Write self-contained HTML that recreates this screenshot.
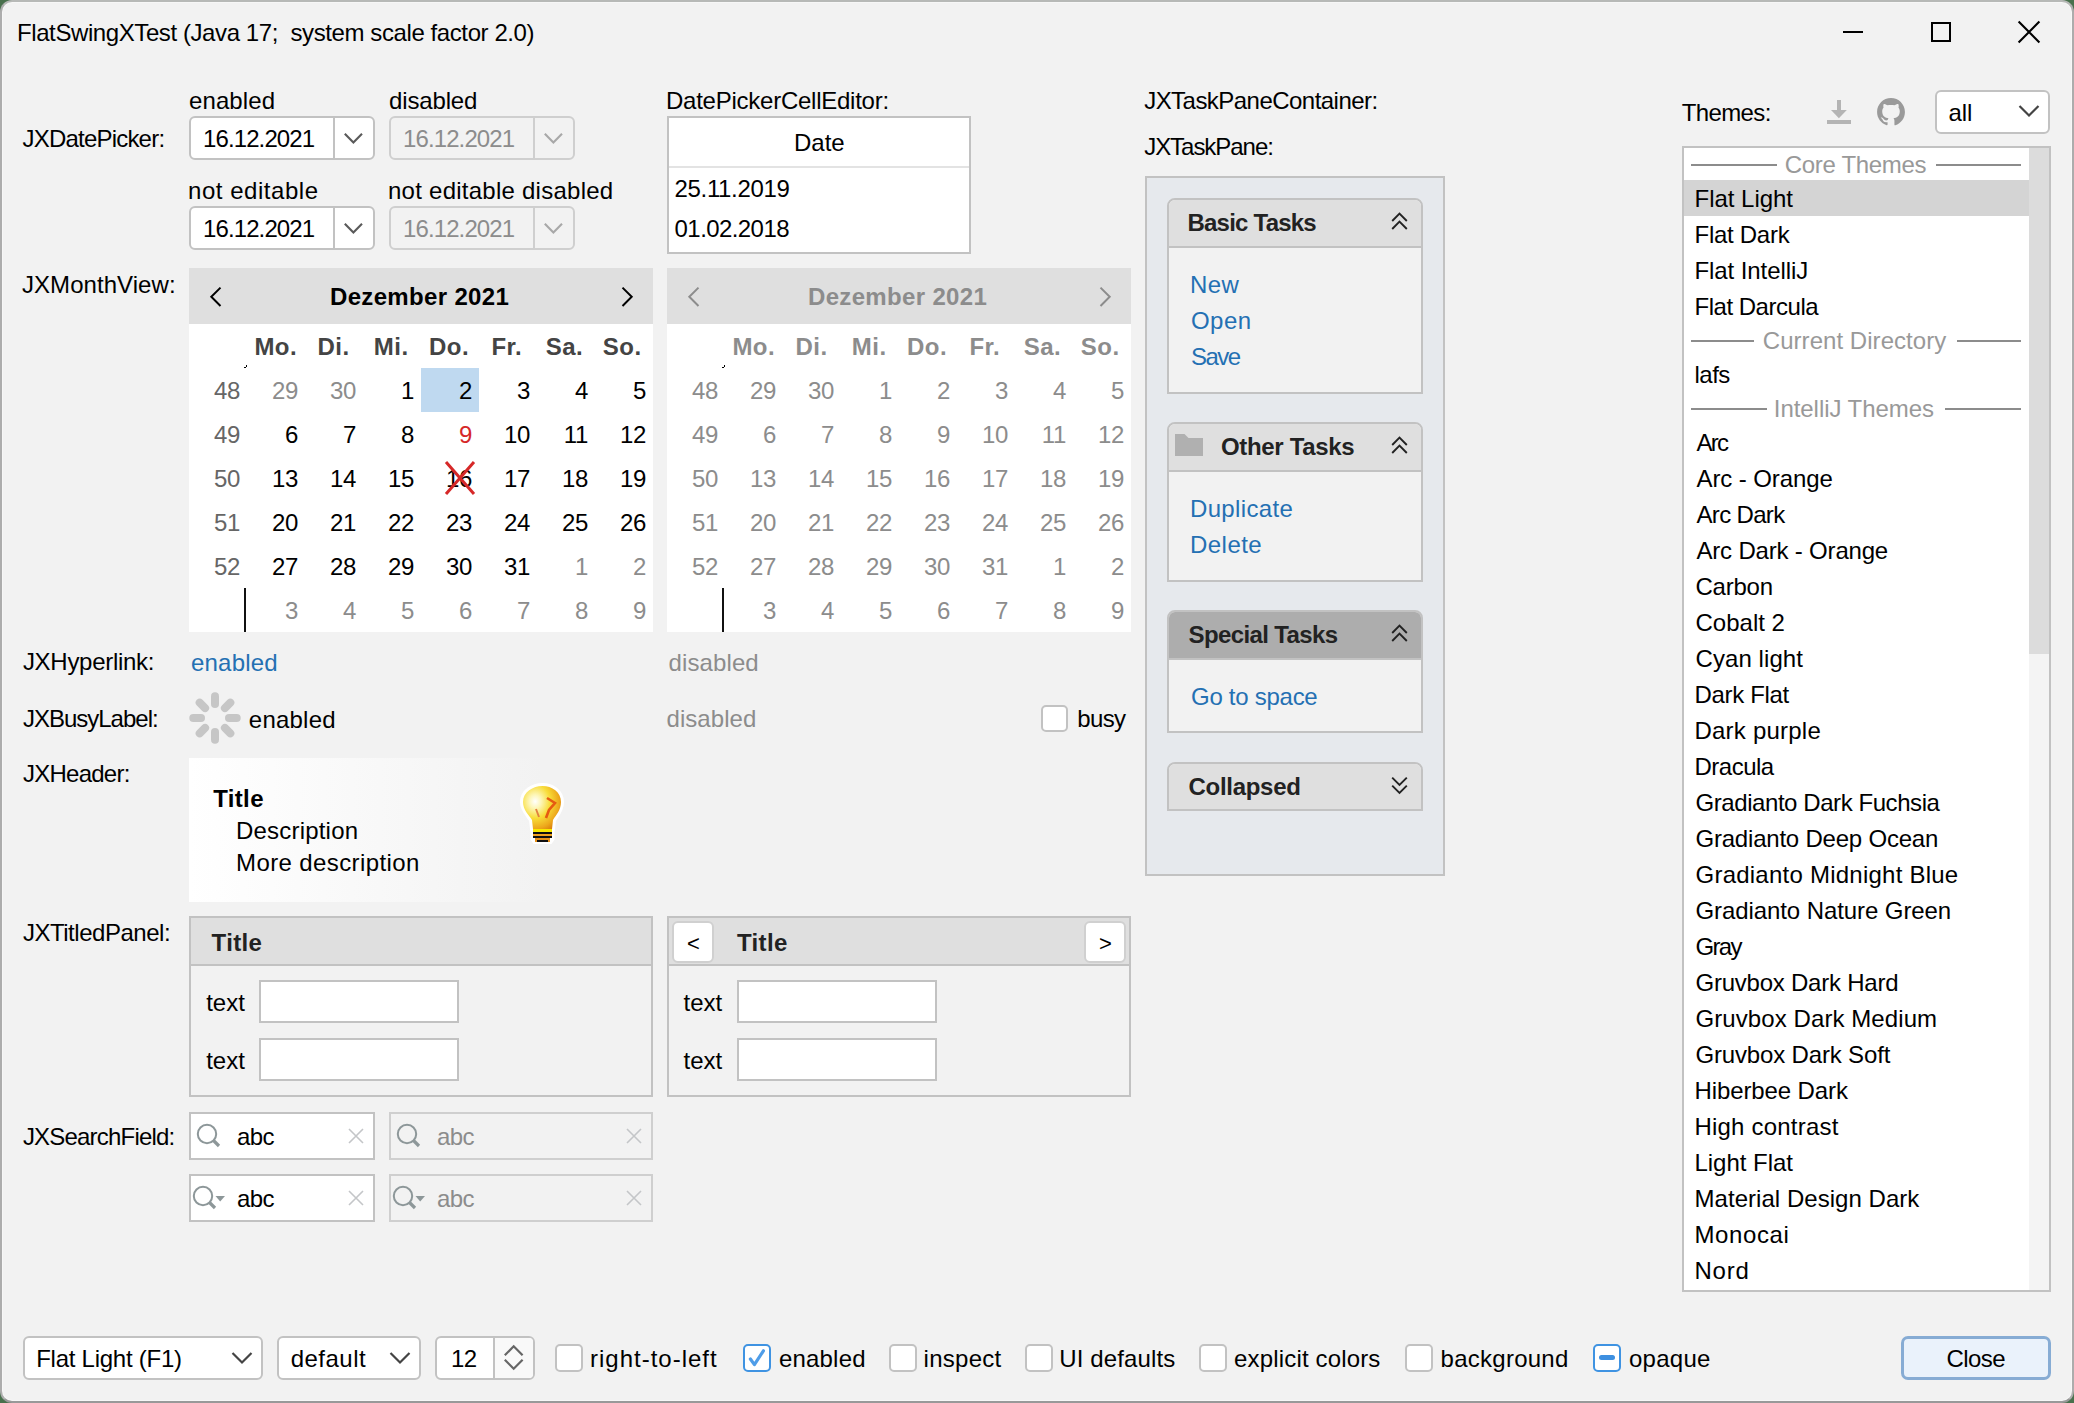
<!DOCTYPE html>
<html><head><meta charset="utf-8"><style>
html,body{margin:0;padding:0;width:2074px;height:1403px;overflow:hidden;background:#48704c}
.win{position:absolute;left:0;top:0;width:2074px;height:1403px;box-sizing:border-box;border:2px solid #b7b9b7;border-left-color:#adadad;border-right-color:#acacac;border-bottom-color:#999;border-radius:12px;background:#f2f2f2;box-shadow:inset 0 0 0 1px #f7f7f7;overflow:hidden}
.t{position:absolute;white-space:nowrap;line-height:28px;font-family:"Liberation Sans",sans-serif;font-size:24px}
</style></head><body><div class="win"></div>
<div class="t" style="left:17px;top:19px;color:#000;letter-spacing:-0.408px;">FlatSwingXTest (Java 17;&nbsp; system scale factor 2.0)</div>
<div style="position:absolute;left:1843px;top:31px;width:20px;height:2px;box-sizing:border-box;background:#000"></div>
<div style="position:absolute;left:1931px;top:22px;width:20px;height:20px;box-sizing:border-box;border:2px solid #000"></div>
<svg style="position:absolute;left:2016px;top:19px;" width="26" height="26" viewBox="0 0 26 26"><path d="M2.6 2.6 L23.4 23.4 M23.4 2.6 L2.6 23.4" stroke="#000" stroke-width="2.1" fill="none"/></svg>
<div class="t" style="left:22.5px;top:125px;color:#000;letter-spacing:-0.792px;">JXDatePicker:</div>
<div class="t" style="left:189px;top:87px;color:#000;letter-spacing:0.100px;">enabled</div>
<div class="t" style="left:389px;top:87px;color:#000;letter-spacing:-0.143px;">disabled</div>
<div class="t" style="left:188px;top:177px;color:#000;letter-spacing:0.545px;">not editable</div>
<div class="t" style="left:388px;top:177px;color:#000;letter-spacing:0.250px;">not editable disabled</div>
<div style="position:absolute;left:189px;top:116px;width:186px;height:44px;box-sizing:border-box;border:2px solid #c2c2c2;border-radius:6px;background:#fff"></div>
<div style="position:absolute;left:333px;top:118px;width:2px;height:40px;box-sizing:border-box;background:#c2c2c2"></div>
<svg style="position:absolute;left:344px;top:133px;" width="20" height="12" viewBox="0 0 20 12"><path d="M0.8 0.8 L9.4 9.6 L18 0.8" stroke="#5a5a5a" stroke-width="2.1" fill="none"/></svg>
<div class="t" style="left:203px;top:125px;color:#000;letter-spacing:-0.889px;">16.12.2021</div>
<div style="position:absolute;left:389px;top:116px;width:186px;height:44px;box-sizing:border-box;border:2px solid #cfcfcf;border-radius:6px;background:#f2f2f2"></div>
<div style="position:absolute;left:533px;top:118px;width:2px;height:40px;box-sizing:border-box;background:#cfcfcf"></div>
<svg style="position:absolute;left:544px;top:133px;" width="20" height="12" viewBox="0 0 20 12"><path d="M0.8 0.8 L9.4 9.6 L18 0.8" stroke="#a8a8a8" stroke-width="2.1" fill="none"/></svg>
<div class="t" style="left:403px;top:125px;color:#8c8c8c;letter-spacing:-0.889px;">16.12.2021</div>
<div style="position:absolute;left:189px;top:206px;width:186px;height:44px;box-sizing:border-box;border:2px solid #c2c2c2;border-radius:6px;background:#fff"></div>
<div style="position:absolute;left:333px;top:208px;width:2px;height:40px;box-sizing:border-box;background:#c2c2c2"></div>
<svg style="position:absolute;left:344px;top:223px;" width="20" height="12" viewBox="0 0 20 12"><path d="M0.8 0.8 L9.4 9.6 L18 0.8" stroke="#5a5a5a" stroke-width="2.1" fill="none"/></svg>
<div class="t" style="left:203px;top:215px;color:#000;letter-spacing:-0.889px;">16.12.2021</div>
<div style="position:absolute;left:389px;top:206px;width:186px;height:44px;box-sizing:border-box;border:2px solid #cfcfcf;border-radius:6px;background:#f2f2f2"></div>
<div style="position:absolute;left:533px;top:208px;width:2px;height:40px;box-sizing:border-box;background:#cfcfcf"></div>
<svg style="position:absolute;left:544px;top:223px;" width="20" height="12" viewBox="0 0 20 12"><path d="M0.8 0.8 L9.4 9.6 L18 0.8" stroke="#a8a8a8" stroke-width="2.1" fill="none"/></svg>
<div class="t" style="left:403px;top:215px;color:#8c8c8c;letter-spacing:-0.889px;">16.12.2021</div>
<div class="t" style="left:666px;top:87px;color:#000;letter-spacing:-0.250px;">DatePickerCellEditor:</div>
<div style="position:absolute;left:667px;top:116px;width:304px;height:138px;box-sizing:border-box;border:2px solid #c2c2c2;background:#fff"></div>
<div style="position:absolute;left:669px;top:166px;width:300px;height:2px;box-sizing:border-box;background:#e3e3e3"></div>
<div class="t" style="left:794px;top:129px;color:#000;letter-spacing:0.000px;">Date</div>
<div class="t" style="left:674.6px;top:175px;color:#000;letter-spacing:-0.356px;">25.11.2019</div>
<div class="t" style="left:674.6px;top:215px;color:#000;letter-spacing:-0.578px;">01.02.2018</div>
<div class="t" style="left:22px;top:271px;color:#000;letter-spacing:0.055px;">JXMonthView:</div>
<div style="position:absolute;left:189px;top:268px;width:464px;height:364px;box-sizing:border-box;background:#fff"></div>
<div style="position:absolute;left:189px;top:268px;width:464px;height:56px;box-sizing:border-box;background:#dfdfdf"></div>
<div class="t" style="left:330px;top:283px;color:#000;font-weight:bold;letter-spacing:0.333px;">Dezember 2021</div>
<svg style="position:absolute;left:208px;top:285px;" width="16" height="24" viewBox="0 0 16 24"><path d="M12.5 2.6 L3.3 11.8 L12.5 21" stroke="#000" stroke-width="2" fill="none"/></svg>
<svg style="position:absolute;left:619px;top:285px;" width="16" height="24" viewBox="0 0 16 24"><path d="M3.5 2.6 L12.7 11.8 L3.5 21" stroke="#000" stroke-width="2" fill="none"/></svg>
<div class="t" style="left:235.8px;width:80px;text-align:center;top:333px;color:#444;font-weight:bold;letter-spacing:0.5px">Mo.</div>
<div class="t" style="left:293.5px;width:80px;text-align:center;top:333px;color:#444;font-weight:bold;letter-spacing:0.5px">Di.</div>
<div class="t" style="left:351.2px;width:80px;text-align:center;top:333px;color:#444;font-weight:bold;letter-spacing:0.5px">Mi.</div>
<div class="t" style="left:409.0px;width:80px;text-align:center;top:333px;color:#444;font-weight:bold;letter-spacing:0.5px">Do.</div>
<div class="t" style="left:466.8px;width:80px;text-align:center;top:333px;color:#444;font-weight:bold;letter-spacing:0.5px">Fr.</div>
<div class="t" style="left:524.5px;width:80px;text-align:center;top:333px;color:#444;font-weight:bold;letter-spacing:0.5px">Sa.</div>
<div class="t" style="left:582.2px;width:80px;text-align:center;top:333px;color:#444;font-weight:bold;letter-spacing:0.5px">So.</div>
<div style="position:absolute;left:244px;top:367px;width:2px;height:1px;box-sizing:border-box;background:#000"></div>
<div style="position:absolute;left:246px;top:365px;width:1px;height:2px;box-sizing:border-box;background:#000"></div>
<div style="position:absolute;left:244px;top:588px;width:2px;height:44px;box-sizing:border-box;background:#111"></div>
<div style="position:absolute;left:421px;top:368px;width:58px;height:44px;box-sizing:border-box;background:#bfd9f0"></div>
<div class="t" style="left:189px;width:51px;text-align:right;top:377px;color:#666;letter-spacing:-0.3px">48</div>
<div class="t" style="left:238px;width:60px;text-align:right;top:377px;color:#8c8c8c;letter-spacing:-0.3px">29</div>
<div class="t" style="left:296px;width:60px;text-align:right;top:377px;color:#8c8c8c;letter-spacing:-0.3px">30</div>
<div class="t" style="left:354px;width:60px;text-align:right;top:377px;color:#000;letter-spacing:-0.3px">1</div>
<div class="t" style="left:412px;width:60px;text-align:right;top:377px;color:#000;letter-spacing:-0.3px">2</div>
<div class="t" style="left:470px;width:60px;text-align:right;top:377px;color:#000;letter-spacing:-0.3px">3</div>
<div class="t" style="left:528px;width:60px;text-align:right;top:377px;color:#000;letter-spacing:-0.3px">4</div>
<div class="t" style="left:586px;width:60px;text-align:right;top:377px;color:#000;letter-spacing:-0.3px">5</div>
<div class="t" style="left:189px;width:51px;text-align:right;top:421px;color:#666;letter-spacing:-0.3px">49</div>
<div class="t" style="left:238px;width:60px;text-align:right;top:421px;color:#000;letter-spacing:-0.3px">6</div>
<div class="t" style="left:296px;width:60px;text-align:right;top:421px;color:#000;letter-spacing:-0.3px">7</div>
<div class="t" style="left:354px;width:60px;text-align:right;top:421px;color:#000;letter-spacing:-0.3px">8</div>
<div class="t" style="left:412px;width:60px;text-align:right;top:421px;color:#d62828;letter-spacing:-0.3px">9</div>
<div class="t" style="left:470px;width:60px;text-align:right;top:421px;color:#000;letter-spacing:-0.3px">10</div>
<div class="t" style="left:528px;width:60px;text-align:right;top:421px;color:#000;letter-spacing:-0.3px">11</div>
<div class="t" style="left:586px;width:60px;text-align:right;top:421px;color:#000;letter-spacing:-0.3px">12</div>
<div class="t" style="left:189px;width:51px;text-align:right;top:465px;color:#666;letter-spacing:-0.3px">50</div>
<div class="t" style="left:238px;width:60px;text-align:right;top:465px;color:#000;letter-spacing:-0.3px">13</div>
<div class="t" style="left:296px;width:60px;text-align:right;top:465px;color:#000;letter-spacing:-0.3px">14</div>
<div class="t" style="left:354px;width:60px;text-align:right;top:465px;color:#000;letter-spacing:-0.3px">15</div>
<div class="t" style="left:412px;width:60px;text-align:right;top:465px;color:#000;letter-spacing:-0.3px">16</div>
<div class="t" style="left:470px;width:60px;text-align:right;top:465px;color:#000;letter-spacing:-0.3px">17</div>
<div class="t" style="left:528px;width:60px;text-align:right;top:465px;color:#000;letter-spacing:-0.3px">18</div>
<div class="t" style="left:586px;width:60px;text-align:right;top:465px;color:#000;letter-spacing:-0.3px">19</div>
<div class="t" style="left:189px;width:51px;text-align:right;top:509px;color:#666;letter-spacing:-0.3px">51</div>
<div class="t" style="left:238px;width:60px;text-align:right;top:509px;color:#000;letter-spacing:-0.3px">20</div>
<div class="t" style="left:296px;width:60px;text-align:right;top:509px;color:#000;letter-spacing:-0.3px">21</div>
<div class="t" style="left:354px;width:60px;text-align:right;top:509px;color:#000;letter-spacing:-0.3px">22</div>
<div class="t" style="left:412px;width:60px;text-align:right;top:509px;color:#000;letter-spacing:-0.3px">23</div>
<div class="t" style="left:470px;width:60px;text-align:right;top:509px;color:#000;letter-spacing:-0.3px">24</div>
<div class="t" style="left:528px;width:60px;text-align:right;top:509px;color:#000;letter-spacing:-0.3px">25</div>
<div class="t" style="left:586px;width:60px;text-align:right;top:509px;color:#000;letter-spacing:-0.3px">26</div>
<div class="t" style="left:189px;width:51px;text-align:right;top:553px;color:#666;letter-spacing:-0.3px">52</div>
<div class="t" style="left:238px;width:60px;text-align:right;top:553px;color:#000;letter-spacing:-0.3px">27</div>
<div class="t" style="left:296px;width:60px;text-align:right;top:553px;color:#000;letter-spacing:-0.3px">28</div>
<div class="t" style="left:354px;width:60px;text-align:right;top:553px;color:#000;letter-spacing:-0.3px">29</div>
<div class="t" style="left:412px;width:60px;text-align:right;top:553px;color:#000;letter-spacing:-0.3px">30</div>
<div class="t" style="left:470px;width:60px;text-align:right;top:553px;color:#000;letter-spacing:-0.3px">31</div>
<div class="t" style="left:528px;width:60px;text-align:right;top:553px;color:#8c8c8c;letter-spacing:-0.3px">1</div>
<div class="t" style="left:586px;width:60px;text-align:right;top:553px;color:#8c8c8c;letter-spacing:-0.3px">2</div>
<div class="t" style="left:238px;width:60px;text-align:right;top:597px;color:#8c8c8c;letter-spacing:-0.3px">3</div>
<div class="t" style="left:296px;width:60px;text-align:right;top:597px;color:#8c8c8c;letter-spacing:-0.3px">4</div>
<div class="t" style="left:354px;width:60px;text-align:right;top:597px;color:#8c8c8c;letter-spacing:-0.3px">5</div>
<div class="t" style="left:412px;width:60px;text-align:right;top:597px;color:#8c8c8c;letter-spacing:-0.3px">6</div>
<div class="t" style="left:470px;width:60px;text-align:right;top:597px;color:#8c8c8c;letter-spacing:-0.3px">7</div>
<div class="t" style="left:528px;width:60px;text-align:right;top:597px;color:#8c8c8c;letter-spacing:-0.3px">8</div>
<div class="t" style="left:586px;width:60px;text-align:right;top:597px;color:#8c8c8c;letter-spacing:-0.3px">9</div>
<svg style="position:absolute;left:444px;top:460px;" width="32" height="36" viewBox="0 0 32 36"><path d="M2 2 L30 34 M30 2 L2 34" stroke="#d62828" stroke-width="3" fill="none"/></svg>
<div style="position:absolute;left:667px;top:268px;width:464px;height:364px;box-sizing:border-box;background:#fff"></div>
<div style="position:absolute;left:667px;top:268px;width:464px;height:56px;box-sizing:border-box;background:#dfdfdf"></div>
<div class="t" style="left:808px;top:283px;color:#8c8c8c;font-weight:bold;letter-spacing:0.333px;">Dezember 2021</div>
<svg style="position:absolute;left:686px;top:285px;" width="16" height="24" viewBox="0 0 16 24"><path d="M12.5 2.6 L3.3 11.8 L12.5 21" stroke="#8c8c8c" stroke-width="2" fill="none"/></svg>
<svg style="position:absolute;left:1097px;top:285px;" width="16" height="24" viewBox="0 0 16 24"><path d="M3.5 2.6 L12.7 11.8 L3.5 21" stroke="#8c8c8c" stroke-width="2" fill="none"/></svg>
<div class="t" style="left:713.8px;width:80px;text-align:center;top:333px;color:#8c8c8c;font-weight:bold;letter-spacing:0.5px">Mo.</div>
<div class="t" style="left:771.5px;width:80px;text-align:center;top:333px;color:#8c8c8c;font-weight:bold;letter-spacing:0.5px">Di.</div>
<div class="t" style="left:829.2px;width:80px;text-align:center;top:333px;color:#8c8c8c;font-weight:bold;letter-spacing:0.5px">Mi.</div>
<div class="t" style="left:887.0px;width:80px;text-align:center;top:333px;color:#8c8c8c;font-weight:bold;letter-spacing:0.5px">Do.</div>
<div class="t" style="left:944.8px;width:80px;text-align:center;top:333px;color:#8c8c8c;font-weight:bold;letter-spacing:0.5px">Fr.</div>
<div class="t" style="left:1002.5px;width:80px;text-align:center;top:333px;color:#8c8c8c;font-weight:bold;letter-spacing:0.5px">Sa.</div>
<div class="t" style="left:1060.2px;width:80px;text-align:center;top:333px;color:#8c8c8c;font-weight:bold;letter-spacing:0.5px">So.</div>
<div style="position:absolute;left:722px;top:367px;width:2px;height:1px;box-sizing:border-box;background:#000"></div>
<div style="position:absolute;left:724px;top:365px;width:1px;height:2px;box-sizing:border-box;background:#000"></div>
<div style="position:absolute;left:722px;top:588px;width:2px;height:44px;box-sizing:border-box;background:#111"></div>
<div class="t" style="left:667px;width:51px;text-align:right;top:377px;color:#8c8c8c;letter-spacing:-0.3px">48</div>
<div class="t" style="left:716px;width:60px;text-align:right;top:377px;color:#8c8c8c;letter-spacing:-0.3px">29</div>
<div class="t" style="left:774px;width:60px;text-align:right;top:377px;color:#8c8c8c;letter-spacing:-0.3px">30</div>
<div class="t" style="left:832px;width:60px;text-align:right;top:377px;color:#8c8c8c;letter-spacing:-0.3px">1</div>
<div class="t" style="left:890px;width:60px;text-align:right;top:377px;color:#8c8c8c;letter-spacing:-0.3px">2</div>
<div class="t" style="left:948px;width:60px;text-align:right;top:377px;color:#8c8c8c;letter-spacing:-0.3px">3</div>
<div class="t" style="left:1006px;width:60px;text-align:right;top:377px;color:#8c8c8c;letter-spacing:-0.3px">4</div>
<div class="t" style="left:1064px;width:60px;text-align:right;top:377px;color:#8c8c8c;letter-spacing:-0.3px">5</div>
<div class="t" style="left:667px;width:51px;text-align:right;top:421px;color:#8c8c8c;letter-spacing:-0.3px">49</div>
<div class="t" style="left:716px;width:60px;text-align:right;top:421px;color:#8c8c8c;letter-spacing:-0.3px">6</div>
<div class="t" style="left:774px;width:60px;text-align:right;top:421px;color:#8c8c8c;letter-spacing:-0.3px">7</div>
<div class="t" style="left:832px;width:60px;text-align:right;top:421px;color:#8c8c8c;letter-spacing:-0.3px">8</div>
<div class="t" style="left:890px;width:60px;text-align:right;top:421px;color:#8c8c8c;letter-spacing:-0.3px">9</div>
<div class="t" style="left:948px;width:60px;text-align:right;top:421px;color:#8c8c8c;letter-spacing:-0.3px">10</div>
<div class="t" style="left:1006px;width:60px;text-align:right;top:421px;color:#8c8c8c;letter-spacing:-0.3px">11</div>
<div class="t" style="left:1064px;width:60px;text-align:right;top:421px;color:#8c8c8c;letter-spacing:-0.3px">12</div>
<div class="t" style="left:667px;width:51px;text-align:right;top:465px;color:#8c8c8c;letter-spacing:-0.3px">50</div>
<div class="t" style="left:716px;width:60px;text-align:right;top:465px;color:#8c8c8c;letter-spacing:-0.3px">13</div>
<div class="t" style="left:774px;width:60px;text-align:right;top:465px;color:#8c8c8c;letter-spacing:-0.3px">14</div>
<div class="t" style="left:832px;width:60px;text-align:right;top:465px;color:#8c8c8c;letter-spacing:-0.3px">15</div>
<div class="t" style="left:890px;width:60px;text-align:right;top:465px;color:#8c8c8c;letter-spacing:-0.3px">16</div>
<div class="t" style="left:948px;width:60px;text-align:right;top:465px;color:#8c8c8c;letter-spacing:-0.3px">17</div>
<div class="t" style="left:1006px;width:60px;text-align:right;top:465px;color:#8c8c8c;letter-spacing:-0.3px">18</div>
<div class="t" style="left:1064px;width:60px;text-align:right;top:465px;color:#8c8c8c;letter-spacing:-0.3px">19</div>
<div class="t" style="left:667px;width:51px;text-align:right;top:509px;color:#8c8c8c;letter-spacing:-0.3px">51</div>
<div class="t" style="left:716px;width:60px;text-align:right;top:509px;color:#8c8c8c;letter-spacing:-0.3px">20</div>
<div class="t" style="left:774px;width:60px;text-align:right;top:509px;color:#8c8c8c;letter-spacing:-0.3px">21</div>
<div class="t" style="left:832px;width:60px;text-align:right;top:509px;color:#8c8c8c;letter-spacing:-0.3px">22</div>
<div class="t" style="left:890px;width:60px;text-align:right;top:509px;color:#8c8c8c;letter-spacing:-0.3px">23</div>
<div class="t" style="left:948px;width:60px;text-align:right;top:509px;color:#8c8c8c;letter-spacing:-0.3px">24</div>
<div class="t" style="left:1006px;width:60px;text-align:right;top:509px;color:#8c8c8c;letter-spacing:-0.3px">25</div>
<div class="t" style="left:1064px;width:60px;text-align:right;top:509px;color:#8c8c8c;letter-spacing:-0.3px">26</div>
<div class="t" style="left:667px;width:51px;text-align:right;top:553px;color:#8c8c8c;letter-spacing:-0.3px">52</div>
<div class="t" style="left:716px;width:60px;text-align:right;top:553px;color:#8c8c8c;letter-spacing:-0.3px">27</div>
<div class="t" style="left:774px;width:60px;text-align:right;top:553px;color:#8c8c8c;letter-spacing:-0.3px">28</div>
<div class="t" style="left:832px;width:60px;text-align:right;top:553px;color:#8c8c8c;letter-spacing:-0.3px">29</div>
<div class="t" style="left:890px;width:60px;text-align:right;top:553px;color:#8c8c8c;letter-spacing:-0.3px">30</div>
<div class="t" style="left:948px;width:60px;text-align:right;top:553px;color:#8c8c8c;letter-spacing:-0.3px">31</div>
<div class="t" style="left:1006px;width:60px;text-align:right;top:553px;color:#8c8c8c;letter-spacing:-0.3px">1</div>
<div class="t" style="left:1064px;width:60px;text-align:right;top:553px;color:#8c8c8c;letter-spacing:-0.3px">2</div>
<div class="t" style="left:716px;width:60px;text-align:right;top:597px;color:#8c8c8c;letter-spacing:-0.3px">3</div>
<div class="t" style="left:774px;width:60px;text-align:right;top:597px;color:#8c8c8c;letter-spacing:-0.3px">4</div>
<div class="t" style="left:832px;width:60px;text-align:right;top:597px;color:#8c8c8c;letter-spacing:-0.3px">5</div>
<div class="t" style="left:890px;width:60px;text-align:right;top:597px;color:#8c8c8c;letter-spacing:-0.3px">6</div>
<div class="t" style="left:948px;width:60px;text-align:right;top:597px;color:#8c8c8c;letter-spacing:-0.3px">7</div>
<div class="t" style="left:1006px;width:60px;text-align:right;top:597px;color:#8c8c8c;letter-spacing:-0.3px">8</div>
<div class="t" style="left:1064px;width:60px;text-align:right;top:597px;color:#8c8c8c;letter-spacing:-0.3px">9</div>
<div class="t" style="left:22.9px;top:648px;color:#000;letter-spacing:-0.282px;">JXHyperlink:</div>
<div class="t" style="left:190.9px;top:649px;color:#2470b3;letter-spacing:0.233px;">enabled</div>
<div class="t" style="left:668.5px;top:649px;color:#8c8c8c;letter-spacing:0.114px;">disabled</div>
<div class="t" style="left:22.9px;top:705px;color:#000;letter-spacing:-1.000px;">JXBusyLabel:</div>
<svg style="position:absolute;left:189px;top:692px;" width="52" height="52" viewBox="0 0 52 52"><line x1="40.00" y1="26.00" x2="47.70" y2="26.00" stroke="#c6c6c6" stroke-width="8" stroke-linecap="round"/><line x1="35.90" y1="35.90" x2="41.34" y2="41.34" stroke="#c6c6c6" stroke-width="8" stroke-linecap="round"/><line x1="26.00" y1="40.00" x2="26.00" y2="47.70" stroke="#c6c6c6" stroke-width="8" stroke-linecap="round"/><line x1="16.10" y1="35.90" x2="10.66" y2="41.34" stroke="#c6c6c6" stroke-width="8" stroke-linecap="round"/><line x1="12.00" y1="26.00" x2="4.30" y2="26.00" stroke="#c6c6c6" stroke-width="8" stroke-linecap="round"/><line x1="16.10" y1="16.10" x2="10.66" y2="10.66" stroke="#c6c6c6" stroke-width="8" stroke-linecap="round"/><line x1="26.00" y1="12.00" x2="26.00" y2="4.30" stroke="#c6c6c6" stroke-width="8" stroke-linecap="round"/><line x1="35.90" y1="16.10" x2="41.34" y2="10.66" stroke="#c6c6c6" stroke-width="8" stroke-linecap="round"/></svg>
<div class="t" style="left:248.8px;top:706px;color:#000;letter-spacing:0.233px;">enabled</div>
<div class="t" style="left:666.5px;top:705px;color:#8c8c8c;letter-spacing:0.057px;">disabled</div>
<div style="position:absolute;left:1041px;top:705px;width:27px;height:27px;box-sizing:border-box;border:2px solid #c2c2c2;border-radius:5px;background:#fff"></div>
<div class="t" style="left:1077.2px;top:705px;color:#000;letter-spacing:-0.600px;">busy</div>
<div class="t" style="left:22.9px;top:760px;color:#000;letter-spacing:-0.738px;">JXHeader:</div>
<div style="position:absolute;left:189px;top:758px;width:354px;height:144px;box-sizing:border-box;background:linear-gradient(to right,#ffffff 0%,#f2f2f2 100%)"></div>
<div class="t" style="left:213.2px;top:785px;color:#000;font-weight:bold;letter-spacing:0.350px;">Title</div>
<div class="t" style="left:236px;top:817px;color:#000;letter-spacing:0.200px;">Description</div>
<div class="t" style="left:236px;top:849px;color:#000;letter-spacing:0.393px;">More description</div>
<svg style="position:absolute;left:520px;top:782px;" width="44" height="62" viewBox="0 0 44 62">
<defs><radialGradient id="bg1" cx="0.32" cy="0.36" r="0.78"><stop offset="0" stop-color="#ffffff"/><stop offset="0.2" stop-color="#fdf6b8"/><stop offset="0.5" stop-color="#f8dc38"/><stop offset="0.8" stop-color="#eda81c"/><stop offset="1" stop-color="#d87a08"/></radialGradient></defs>
<path d="M22.5 4 C32 4 41 10 41 20 C41 28 36 33 33 38 L32 47 L13 47 L12 38 C9 33 3 28 3 20 C3 10 13 4 22.5 4 Z" fill="#fff" stroke="#fff" stroke-width="6" stroke-linejoin="round"/>
<path d="M13 46 H32 V57 L29 61 H16 L13 57 Z" fill="#fff" stroke="#fff" stroke-width="5" stroke-linejoin="round"/>
<path d="M22.5 4 C32 4 41 10 41 20 C41 28 36 33 33 38 L32 47 L13 47 L12 38 C9 33 3 28 3 20 C3 10 13 4 22.5 4 Z" fill="url(#bg1)"/>
<path d="M27 16 L35 21 L29 28 L26 36" stroke="#e65a12" stroke-width="2.6" fill="none"/>
<path d="M16 27 L19 35" stroke="#e08040" stroke-width="2" fill="none"/>
<rect x="13" y="47" width="19" height="3" fill="#f8e800"/>
<rect x="13" y="50" width="19" height="6" fill="#f0a020"/>
<rect x="15" y="56" width="15" height="4" fill="#e89018"/>
<path d="M13 51 H32 M13 55 H32 M17 59 H28" stroke="#101010" stroke-width="1.8"/>
</svg>
<div class="t" style="left:22.9px;top:919px;color:#000;letter-spacing:-0.477px;">JXTitledPanel:</div>
<div style="position:absolute;left:189px;top:916px;width:464px;height:181px;box-sizing:border-box;border:2px solid #c2c2c2;background:#f2f2f2"></div>
<div style="position:absolute;left:191px;top:918px;width:460px;height:47px;box-sizing:border-box;background:#dfdfdf"></div>
<div style="position:absolute;left:191px;top:964px;width:460px;height:2px;box-sizing:border-box;background:#c2c2c2"></div>
<div class="t" style="left:211.6px;top:929px;color:#222;font-weight:bold;letter-spacing:0.350px;">Title</div>
<div class="t" style="left:206.2px;top:989px;color:#000;letter-spacing:0.000px;">text</div>
<div class="t" style="left:206.2px;top:1047px;color:#000;letter-spacing:0.000px;">text</div>
<div style="position:absolute;left:259px;top:980px;width:200px;height:43px;box-sizing:border-box;border:2px solid #c2c2c2;background:#fff"></div>
<div style="position:absolute;left:259px;top:1038px;width:200px;height:43px;box-sizing:border-box;border:2px solid #c2c2c2;background:#fff"></div>
<div style="position:absolute;left:667px;top:916px;width:464px;height:181px;box-sizing:border-box;border:2px solid #c2c2c2;background:#f2f2f2"></div>
<div style="position:absolute;left:669px;top:918px;width:460px;height:47px;box-sizing:border-box;background:#dfdfdf"></div>
<div style="position:absolute;left:669px;top:964px;width:460px;height:2px;box-sizing:border-box;background:#c2c2c2"></div>
<div style="position:absolute;left:672px;top:921px;width:42px;height:42px;box-sizing:border-box;border:2px solid #d0d0d0;border-radius:6px;background:#fff"></div>
<div style="position:absolute;left:1084px;top:921px;width:42px;height:42px;box-sizing:border-box;border:2px solid #d0d0d0;border-radius:6px;background:#fff"></div>
<div class="t" style="left:687px;top:930px;color:#000;font-size:22px;letter-spacing:-0.150px;">&lt;</div>
<div class="t" style="left:1099px;top:930px;color:#000;font-size:22px;letter-spacing:-0.150px;">&gt;</div>
<div class="t" style="left:737px;top:929px;color:#222;font-weight:bold;letter-spacing:0.350px;">Title</div>
<div class="t" style="left:683.5px;top:989px;color:#000;letter-spacing:0.000px;">text</div>
<div class="t" style="left:683.5px;top:1047px;color:#000;letter-spacing:0.000px;">text</div>
<div style="position:absolute;left:737px;top:980px;width:200px;height:43px;box-sizing:border-box;border:2px solid #c2c2c2;background:#fff"></div>
<div style="position:absolute;left:737px;top:1038px;width:200px;height:43px;box-sizing:border-box;border:2px solid #c2c2c2;background:#fff"></div>
<div class="t" style="left:22.9px;top:1123px;color:#000;letter-spacing:-0.800px;">JXSearchField:</div>
<div style="position:absolute;left:189px;top:1112px;width:186px;height:48px;box-sizing:border-box;border:2px solid #c2c2c2;background:#fff"></div>
<svg style="position:absolute;left:189px;top:1120px;" width="40" height="32" viewBox="0 0 40 32"><circle cx="18" cy="14" r="9.2" stroke="#8d9799" stroke-width="2" fill="none"/><path d="M24.5 20.5 L30 26" stroke="#8d9799" stroke-width="3.2" stroke-linecap="butt"/></svg>
<div class="t" style="left:237px;top:1123px;color:#000;letter-spacing:-0.650px;">abc</div>
<svg style="position:absolute;left:348px;top:1128px;" width="16" height="16" viewBox="0 0 16 16"><path d="M1 1 L15 15 M15 1 L1 15" stroke="#c4c6c8" stroke-width="1.6"/></svg>
<div style="position:absolute;left:389px;top:1112px;width:264px;height:48px;box-sizing:border-box;border:2px solid #cfcfcf;background:#f2f2f2"></div>
<svg style="position:absolute;left:389px;top:1120px;" width="40" height="32" viewBox="0 0 40 32"><circle cx="18" cy="14" r="9.2" stroke="#8d9799" stroke-width="2" fill="none"/><path d="M24.5 20.5 L30 26" stroke="#8d9799" stroke-width="3.2" stroke-linecap="butt"/></svg>
<div class="t" style="left:437px;top:1123px;color:#8c8c8c;letter-spacing:-0.650px;">abc</div>
<svg style="position:absolute;left:626px;top:1128px;" width="16" height="16" viewBox="0 0 16 16"><path d="M1 1 L15 15 M15 1 L1 15" stroke="#c4c6c8" stroke-width="1.6"/></svg>
<div style="position:absolute;left:189px;top:1174px;width:186px;height:48px;box-sizing:border-box;border:2px solid #c2c2c2;background:#fff"></div>
<svg style="position:absolute;left:189px;top:1182px;" width="40" height="32" viewBox="0 0 40 32"><circle cx="14" cy="14" r="9.2" stroke="#8d9799" stroke-width="2" fill="none"/><path d="M20.5 20.5 L26 26" stroke="#8d9799" stroke-width="3.2" stroke-linecap="butt"/><path d="M26.5 14 L36 14 L31.2 19.5 Z" fill="#8d9799"/></svg>
<div class="t" style="left:237px;top:1185px;color:#000;letter-spacing:-0.650px;">abc</div>
<svg style="position:absolute;left:348px;top:1190px;" width="16" height="16" viewBox="0 0 16 16"><path d="M1 1 L15 15 M15 1 L1 15" stroke="#c4c6c8" stroke-width="1.6"/></svg>
<div style="position:absolute;left:389px;top:1174px;width:264px;height:48px;box-sizing:border-box;border:2px solid #cfcfcf;background:#f2f2f2"></div>
<svg style="position:absolute;left:389px;top:1182px;" width="40" height="32" viewBox="0 0 40 32"><circle cx="14" cy="14" r="9.2" stroke="#8d9799" stroke-width="2" fill="none"/><path d="M20.5 20.5 L26 26" stroke="#8d9799" stroke-width="3.2" stroke-linecap="butt"/><path d="M26.5 14 L36 14 L31.2 19.5 Z" fill="#8d9799"/></svg>
<div class="t" style="left:437px;top:1185px;color:#8c8c8c;letter-spacing:-0.650px;">abc</div>
<svg style="position:absolute;left:626px;top:1190px;" width="16" height="16" viewBox="0 0 16 16"><path d="M1 1 L15 15 M15 1 L1 15" stroke="#c4c6c8" stroke-width="1.6"/></svg>
<div class="t" style="left:1144.2px;top:87px;color:#000;letter-spacing:-0.537px;">JXTaskPaneContainer:</div>
<div class="t" style="left:1144.2px;top:133px;color:#000;letter-spacing:-1.040px;">JXTaskPane:</div>
<div style="position:absolute;left:1145px;top:176px;width:300px;height:700px;box-sizing:border-box;border:2px solid #c2c2c2;background:#e6e9ed"></div>
<div style="position:absolute;left:1167px;top:198px;width:256px;height:196px;box-sizing:border-box;border:2px solid #c2c2c2;border-radius:8px 8px 0 0;background:#f2f2f2"></div>
<div style="position:absolute;left:1169px;top:200px;width:252px;height:46px;box-sizing:border-box;background:#dfdfdf;border-radius:6px 6px 0 0"></div>
<div style="position:absolute;left:1169px;top:246px;width:252px;height:2px;box-sizing:border-box;background:#c2c2c2"></div>
<div class="t" style="left:1187.5px;top:209px;color:#222;font-weight:bold;letter-spacing:-0.780px;">Basic Tasks</div>
<svg style="position:absolute;left:1391px;top:212px;" width="17" height="19" viewBox="0 0 17 19"><path d="M1.2 9 L8.5 1.7 L15.8 9 M1.2 17 L8.5 9.7 L15.8 17" stroke="#222" stroke-width="1.9" fill="none"/></svg>
<div class="t" style="left:1190px;top:271px;color:#2470b3;letter-spacing:0.400px;">New</div>
<div class="t" style="left:1191px;top:307px;color:#2470b3;letter-spacing:0.433px;">Open</div>
<div class="t" style="left:1191px;top:343px;color:#2470b3;letter-spacing:-1.500px;">Save</div>
<div style="position:absolute;left:1167px;top:422px;width:256px;height:160px;box-sizing:border-box;border:2px solid #c2c2c2;border-radius:8px 8px 0 0;background:#f2f2f2"></div>
<div style="position:absolute;left:1169px;top:424px;width:252px;height:46px;box-sizing:border-box;background:#dfdfdf;border-radius:6px 6px 0 0"></div>
<div style="position:absolute;left:1169px;top:470px;width:252px;height:2px;box-sizing:border-box;background:#c2c2c2"></div>
<div class="t" style="left:1221px;top:433px;color:#222;font-weight:bold;letter-spacing:-0.330px;">Other Tasks</div>
<svg style="position:absolute;left:1175px;top:434px;" width="28" height="22" viewBox="0 0 28 22"><path d="M0 0 H9.5 L13.5 4 H28 V22 H0 Z" fill="#b0b0b0"/></svg>
<svg style="position:absolute;left:1391px;top:436px;" width="17" height="19" viewBox="0 0 17 19"><path d="M1.2 9 L8.5 1.7 L15.8 9 M1.2 17 L8.5 9.7 L15.8 17" stroke="#222" stroke-width="1.9" fill="none"/></svg>
<div class="t" style="left:1190px;top:495px;color:#2470b3;letter-spacing:0.338px;">Duplicate</div>
<div class="t" style="left:1190px;top:531px;color:#2470b3;letter-spacing:0.460px;">Delete</div>
<div style="position:absolute;left:1167px;top:610px;width:256px;height:123px;box-sizing:border-box;border:2px solid #c2c2c2;border-radius:8px 8px 0 0;background:#f2f2f2"></div>
<div style="position:absolute;left:1169px;top:612px;width:252px;height:46px;box-sizing:border-box;background:#adadad;border-radius:6px 6px 0 0"></div>
<div style="position:absolute;left:1169px;top:658px;width:252px;height:2px;box-sizing:border-box;background:#c2c2c2"></div>
<div class="t" style="left:1188.5px;top:621px;color:#222;font-weight:bold;letter-spacing:-0.608px;">Special Tasks</div>
<svg style="position:absolute;left:1391px;top:624px;" width="17" height="19" viewBox="0 0 17 19"><path d="M1.2 9 L8.5 1.7 L15.8 9 M1.2 17 L8.5 9.7 L15.8 17" stroke="#222" stroke-width="1.9" fill="none"/></svg>
<div class="t" style="left:1191px;top:683px;color:#2470b3;letter-spacing:-0.270px;">Go to space</div>
<div style="position:absolute;left:1167px;top:762px;width:256px;height:49px;box-sizing:border-box;border:2px solid #c2c2c2;border-radius:8px 8px 0 0;background:#f2f2f2"></div>
<div style="position:absolute;left:1169px;top:764px;width:252px;height:45px;box-sizing:border-box;background:#dfdfdf;border-radius:6px 6px 0 0"></div>
<div class="t" style="left:1188.5px;top:773px;color:#222;font-weight:bold;letter-spacing:-0.287px;">Collapsed</div>
<svg style="position:absolute;left:1391px;top:776px;" width="17" height="19" viewBox="0 0 17 19"><path d="M1.2 1.7 L8.5 9 L15.8 1.7 M1.2 9.7 L8.5 17 L15.8 9.7" stroke="#222" stroke-width="1.9" fill="none"/></svg>
<div class="t" style="left:1681.8px;top:99px;color:#000;letter-spacing:-0.633px;">Themes:</div>
<svg style="position:absolute;left:1826px;top:98px;" width="26" height="28" viewBox="0 0 26 28"><rect x="11" y="2" width="4" height="10.5" fill="#b4b4b4"/><path d="M5 12 L20.8 12 L12.9 20.2 Z" fill="#b4b4b4"/><rect x="1" y="22" width="24" height="4" fill="#b4b4b4"/></svg>
<svg style="position:absolute;left:1876px;top:97px" width="30" height="30" viewBox="0 0 28 28"><path fill="#9a9a9a" d="M14 1C6.8 1 1 6.8 1 14c0 5.7 3.7 10.6 8.9 12.3.7.1.9-.3.9-.6v-2.2c-3.6.8-4.4-1.700-4.4-1.7-.6-1.5-1.4-1.9-1.4-1.9-1.2-.8.1-.8.1-.8 1.3.1 2 1.300 2 1.3 1.2 2 3 1.4 3.8 1.1.1-.8.5-1.4.8-1.7-2.9-.3-5.9-1.4-5.9-6.4 0-1.4.5-2.6 1.3-3.5-.1-.3-.6-1.6.1-3.4 0 0 1.1-.3 3.6 1.3 1-.3 2.1-.4 3.2-.4s2.2.1 3.2.4c2.5-1.7 3.6-1.3 3.6-1.3.7 1.8.3 3.1.1 3.4.8.9 1.3 2.1 1.3 3.5 0 5-3 6.1-5.900 6.4.5.4.9 1.2.9 2.4v3.6c0 .3.2.7.9.6C23.3 24.6 27 19.7 27 14 27 6.8 21.2 1 14 1z"/></svg>
<div style="position:absolute;left:1935px;top:90px;width:115px;height:44px;box-sizing:border-box;border:2px solid #c2c2c2;border-radius:6px;background:#fff"></div>
<div class="t" style="left:1948.6px;top:99px;color:#000;letter-spacing:-0.150px;">all</div>
<svg style="position:absolute;left:2018px;top:104px;" width="22" height="14" viewBox="0 0 22 14"><path d="M1.5 2 L11 11.5 L20.5 2" stroke="#444" stroke-width="2.2" fill="none"/></svg>
<div style="position:absolute;left:1682px;top:146px;width:369px;height:1146px;box-sizing:border-box;border:2px solid #c2c2c2;background:#fff"></div>
<div style="position:absolute;left:2029px;top:148px;width:20px;height:506px;box-sizing:border-box;background:#dcdcdc"></div>
<div style="position:absolute;left:2029px;top:654px;width:20px;height:636px;box-sizing:border-box;background:#f4f4f4"></div>
<div class="t" style="left:1784.8px;top:151px;color:#999;letter-spacing:-0.330px;">Core Themes</div>
<div style="position:absolute;left:1691px;top:164px;width:86px;height:2px;box-sizing:border-box;background:#8c8c8c"></div>
<div style="position:absolute;left:1935.5px;top:164px;width:85.5px;height:2px;box-sizing:border-box;background:#8c8c8c"></div>
<div style="position:absolute;left:1684px;top:180px;width:345px;height:36px;box-sizing:border-box;background:#d4d4d4"></div>
<div class="t" style="left:1694.5px;top:185px;color:#000;letter-spacing:-0.022px;">Flat Light</div>
<div class="t" style="left:1694.5px;top:221px;color:#000;letter-spacing:-0.275px;">Flat Dark</div>
<div class="t" style="left:1694.5px;top:257px;color:#000;letter-spacing:-0.083px;">Flat IntelliJ</div>
<div class="t" style="left:1694.5px;top:293px;color:#000;letter-spacing:-0.482px;">Flat Darcula</div>
<div class="t" style="left:1762.8px;top:327px;color:#999;letter-spacing:0.044px;">Current Directory</div>
<div style="position:absolute;left:1691px;top:340px;width:63px;height:2px;box-sizing:border-box;background:#8c8c8c"></div>
<div style="position:absolute;left:1957px;top:340px;width:64px;height:2px;box-sizing:border-box;background:#8c8c8c"></div>
<div class="t" style="left:1694.5px;top:361px;color:#000;letter-spacing:-0.500px;">lafs</div>
<div class="t" style="left:1773.8px;top:395px;color:#999;letter-spacing:-0.057px;">IntelliJ Themes</div>
<div style="position:absolute;left:1691px;top:408px;width:75.79999999999995px;height:2px;box-sizing:border-box;background:#8c8c8c"></div>
<div style="position:absolute;left:1945px;top:408px;width:76px;height:2px;box-sizing:border-box;background:#8c8c8c"></div>
<div class="t" style="left:1696.5px;top:429px;color:#000;letter-spacing:-1.750px;">Arc</div>
<div class="t" style="left:1696.5px;top:465px;color:#000;letter-spacing:-0.091px;">Arc - Orange</div>
<div class="t" style="left:1696.5px;top:501px;color:#000;letter-spacing:-0.671px;">Arc Dark</div>
<div class="t" style="left:1696.5px;top:537px;color:#000;letter-spacing:-0.188px;">Arc Dark - Orange</div>
<div class="t" style="left:1695.5px;top:573px;color:#000;letter-spacing:-0.240px;">Carbon</div>
<div class="t" style="left:1695.5px;top:609px;color:#000;letter-spacing:0.000px;">Cobalt 2</div>
<div class="t" style="left:1695.5px;top:645px;color:#000;letter-spacing:0.078px;">Cyan light</div>
<div class="t" style="left:1694.5px;top:681px;color:#000;letter-spacing:-0.325px;">Dark Flat</div>
<div class="t" style="left:1694.5px;top:717px;color:#000;letter-spacing:0.220px;">Dark purple</div>
<div class="t" style="left:1694.5px;top:753px;color:#000;letter-spacing:-0.500px;">Dracula</div>
<div class="t" style="left:1695.5px;top:789px;color:#000;letter-spacing:-0.429px;">Gradianto Dark Fuchsia</div>
<div class="t" style="left:1695.5px;top:825px;color:#000;letter-spacing:-0.211px;">Gradianto Deep Ocean</div>
<div class="t" style="left:1695.5px;top:861px;color:#000;letter-spacing:0.236px;">Gradianto Midnight Blue</div>
<div class="t" style="left:1695.5px;top:897px;color:#000;letter-spacing:-0.086px;">Gradianto Nature Green</div>
<div class="t" style="left:1695.5px;top:933px;color:#000;letter-spacing:-1.667px;">Gray</div>
<div class="t" style="left:1695.5px;top:969px;color:#000;letter-spacing:-0.231px;">Gruvbox Dark Hard</div>
<div class="t" style="left:1695.5px;top:1005px;color:#000;letter-spacing:0.083px;">Gruvbox Dark Medium</div>
<div class="t" style="left:1695.5px;top:1041px;color:#000;letter-spacing:-0.162px;">Gruvbox Dark Soft</div>
<div class="t" style="left:1694.5px;top:1077px;color:#000;letter-spacing:-0.108px;">Hiberbee Dark</div>
<div class="t" style="left:1694.5px;top:1113px;color:#000;letter-spacing:0.200px;">High contrast</div>
<div class="t" style="left:1694.5px;top:1149px;color:#000;letter-spacing:-0.033px;">Light Flat</div>
<div class="t" style="left:1694.5px;top:1185px;color:#000;letter-spacing:0.042px;">Material Design Dark</div>
<div class="t" style="left:1694.5px;top:1221px;color:#000;letter-spacing:0.600px;">Monocai</div>
<div class="t" style="left:1694.5px;top:1257px;color:#000;letter-spacing:0.767px;">Nord</div>
<div style="position:absolute;left:23px;top:1336px;width:240px;height:44px;box-sizing:border-box;border:2px solid #c2c2c2;border-radius:6px;background:#fff"></div>
<div class="t" style="left:36.2px;top:1345px;color:#000;letter-spacing:-0.257px;">Flat Light (F1)</div>
<svg style="position:absolute;left:231px;top:1351px;" width="22" height="14" viewBox="0 0 22 14"><path d="M1.5 2 L11 11.5 L20.5 2" stroke="#444" stroke-width="2.2" fill="none"/></svg>
<div style="position:absolute;left:277px;top:1336px;width:144px;height:44px;box-sizing:border-box;border:2px solid #c2c2c2;border-radius:6px;background:#fff"></div>
<div class="t" style="left:290.7px;top:1345px;color:#000;letter-spacing:0.483px;">default</div>
<svg style="position:absolute;left:389px;top:1351px;" width="22" height="14" viewBox="0 0 22 14"><path d="M1.5 2 L11 11.5 L20.5 2" stroke="#444" stroke-width="2.2" fill="none"/></svg>
<div style="position:absolute;left:435px;top:1336px;width:100px;height:44px;box-sizing:border-box;border:2px solid #c2c2c2;border-radius:6px;background:#fff"></div>
<div style="position:absolute;left:493px;top:1338px;width:2px;height:40px;box-sizing:border-box;background:#c2c2c2"></div>
<div style="position:absolute;left:495px;top:1338px;width:38px;height:40px;box-sizing:border-box;background:#f9f9f9;border-radius:0 4px 4px 0"></div>
<div class="t" style="left:451px;top:1345px;color:#000;letter-spacing:-0.600px;">12</div>
<svg style="position:absolute;left:503px;top:1343px;" width="22" height="30" viewBox="0 0 22 30"><path d="M1.8 12.3 L10.7 3.3 L19.6 12.3 M1.8 16.8 L10.7 25.8 L19.6 16.8" stroke="#666" stroke-width="2.2" fill="none"/></svg>
<div style="position:absolute;left:555px;top:1344px;width:28px;height:28px;box-sizing:border-box;border:2px solid #c2c2c2;border-radius:5px;background:#fff"></div>
<div class="t" style="left:590px;top:1345px;color:#000;letter-spacing:1.000px;">right-to-left</div>
<div style="position:absolute;left:743px;top:1344px;width:28px;height:28px;box-sizing:border-box;border:2px solid #3f93e2;border-radius:5px;background:#fff"></div>
<svg style="position:absolute;left:743px;top:1344px;" width="28" height="28" viewBox="0 0 28 28"><path d="M7.4 15 L11.4 20.6 L20.4 6.8" stroke="#4f9de8" stroke-width="3.2" stroke-linecap="round" stroke-linejoin="round" fill="none"/></svg>
<div class="t" style="left:779px;top:1345px;color:#000;letter-spacing:0.183px;">enabled</div>
<div style="position:absolute;left:889px;top:1344px;width:28px;height:28px;box-sizing:border-box;border:2px solid #c2c2c2;border-radius:5px;background:#fff"></div>
<div class="t" style="left:923.6px;top:1345px;color:#000;letter-spacing:0.267px;">inspect</div>
<div style="position:absolute;left:1025px;top:1344px;width:28px;height:28px;box-sizing:border-box;border:2px solid #c2c2c2;border-radius:5px;background:#fff"></div>
<div class="t" style="left:1059.2px;top:1345px;color:#000;letter-spacing:0.140px;">UI defaults</div>
<div style="position:absolute;left:1199px;top:1344px;width:28px;height:28px;box-sizing:border-box;border:2px solid #c2c2c2;border-radius:5px;background:#fff"></div>
<div class="t" style="left:1234.1px;top:1345px;color:#000;letter-spacing:0.157px;">explicit colors</div>
<div style="position:absolute;left:1405px;top:1344px;width:28px;height:28px;box-sizing:border-box;border:2px solid #c2c2c2;border-radius:5px;background:#fff"></div>
<div class="t" style="left:1440.6px;top:1345px;color:#000;letter-spacing:0.256px;">background</div>
<div style="position:absolute;left:1593px;top:1344px;width:28px;height:28px;box-sizing:border-box;border:2px solid #3f93e2;border-radius:5px;background:#fff"></div>
<div style="position:absolute;left:1599px;top:1355px;width:16px;height:5px;box-sizing:border-box;background:#3d8fe0;border-radius:2.5px"></div>
<div class="t" style="left:1628.9px;top:1345px;color:#000;letter-spacing:0.280px;">opaque</div>
<div style="position:absolute;left:1901px;top:1336px;width:150px;height:44px;box-sizing:border-box;border:3px solid #87acd4;border-radius:7px;background:#eaf2fb"></div>
<div class="t" style="left:1946.5px;top:1345px;color:#000;letter-spacing:-0.550px;">Close</div>
</body></html>
